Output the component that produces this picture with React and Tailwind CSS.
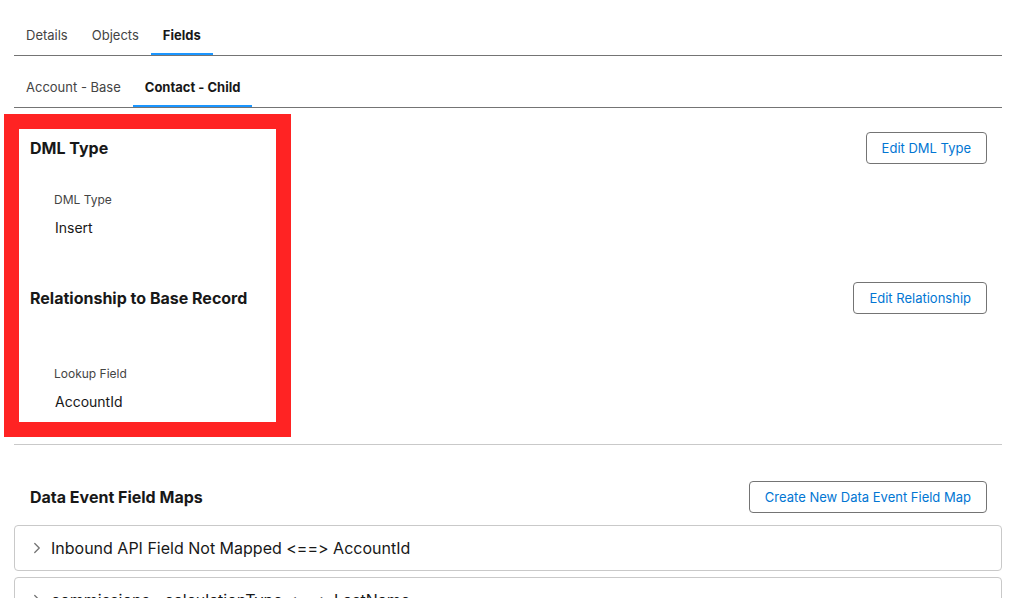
import { ChevronRight } from 'lucide-react'

const mainTabs = ['Details', 'Objects', 'Fields']
const objectTabs = ['Account - Base', 'Contact - Child']

const fieldMaps = [
  'Inbound API Field Not Mapped <==> AccountId',
  'commissions__calculationType <==> LastName',
]

function Tabs({ items, active }) {
  return (
    <div className="flex h-10 border-b border-[#747474]">
      {items.map((t) => (
        <div
          key={t}
          className={
            t === active
              ? 'flex items-center px-3 pt-px text-[13px] font-bold text-[#181818] shadow-[inset_0_-2px_0_#1b96ff]'
              : 'flex items-center px-3 pt-px text-[13px] text-[#444444]'
          }
        >
          {t}
        </div>
      ))}
    </div>
  )
}

function OutlineButton({ children }) {
  return (
    <button className="h-8 rounded border border-[#747474] bg-white px-[15px] pt-px text-[13px] text-[#0176d3]">
      {children}
    </button>
  )
}

function SectionHeader({ title, action, className = '' }) {
  return (
    <div className={`flex h-8 items-center justify-between pl-4 pr-[15px] ${className}`}>
      <h2 className="text-base font-bold text-[#181818]">{title}</h2>
      <OutlineButton>{action}</OutlineButton>
    </div>
  )
}

function Field({ label, value, className = '' }) {
  return (
    <div className={`pl-10 ${className}`}>
      <div className="text-xs leading-[18px] text-[#444444]">{label}</div>
      <div className="mt-[9px] pl-px text-sm leading-5 text-[#181818]">{value}</div>
    </div>
  )
}

export default function App() {
  return (
    <div className="relative h-[598px] overflow-hidden bg-white px-[14px] pt-4 font-['Inter',sans-serif] [font-feature-settings:'calt'_0]">
      <Tabs items={mainTabs} active="Fields" />
      <div className="mt-3">
        <Tabs items={objectTabs} active="Contact - Child" />
      </div>

      <div className="pt-6">
        <SectionHeader title="DML Type" action="Edit DML Type" />
        <Field label="DML Type" value="Insert" className="mt-[27px]" />

        <SectionHeader title="Relationship to Base Record" action="Edit Relationship" className="mt-[44px]" />
        <Field label="Lookup Field" value="AccountId" className="mt-[51px]" />
      </div>

      <div className="mt-8 border-t border-[#c9c9c9]" />

      <SectionHeader title="Data Event Field Maps" action="Create New Data Event Field Map" className="mt-9" />

      <div className="mt-3 flex flex-col gap-[6px]">
        {fieldMaps.map((m) => (
          <div key={m} className="flex h-[46px] items-center gap-[5px] rounded border border-[#c9c9c9] pl-[13px]">
            <ChevronRight className="size-[18px] text-[#747474]" strokeWidth={1.75} />
            <span className="text-base text-[#181818]">{m}</span>
          </div>
        ))}
      </div>

      {/* annotation box drawn over the screenshot */}
      <div className="pointer-events-none absolute left-[4px] top-[114px] h-[323px] w-[287px] border-[15px] border-[#ff2323]" />
    </div>
  )
}
